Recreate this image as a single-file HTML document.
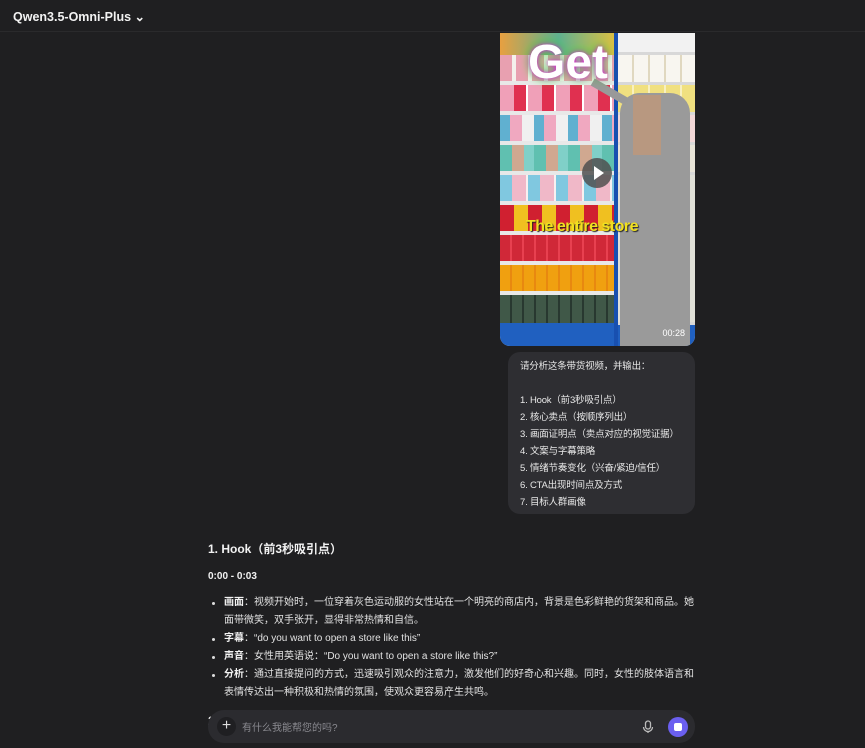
<!DOCTYPE html>
<html><head><meta charset="utf-8"><style>
*{margin:0;padding:0;box-sizing:border-box}
body{width:865px;height:748px;background:#1f1f21;font-family:"Liberation Sans","Noto Sans CJK SC",sans-serif;color:#e6e6e6;position:relative;overflow:hidden}
.hdr{position:absolute;left:0;top:0;width:865px;height:32px;border-bottom:1px solid #2a2a2c}
.hdr span{position:absolute;left:13px;top:9px;font-size:12.5px;font-weight:bold;color:#f2f2f2}
.vid{position:absolute;left:500px;top:33px;width:195px;height:313px;border-radius:0 0 10px 10px;overflow:hidden;background:#ddd}
.row{position:absolute;left:0;width:117px;height:30px;border-bottom:4px solid #e8e8e8}
.r{position:absolute;left:118px;width:77px;height:30px;border-bottom:3px solid #d8d8d8;background:#f0eee8}
.bub{position:absolute;left:508px;top:352px;width:187px;height:162px;background:#2e2e32;border-radius:12px;font-size:9.5px;line-height:17px;padding:6px 8px 6px 12px;color:#e8e8e8;white-space:nowrap;letter-spacing:-.2px}
.main{position:absolute;left:208px;top:540px;width:490px;font-size:10px;color:#e2e2e2}
h3{font-size:12px;font-weight:bold;color:#f2f2f2;margin-bottom:10px}
ul{list-style:none;margin-top:12px}
li{position:relative;padding-left:16px;line-height:18px}
li:before{content:"";position:absolute;left:4px;top:8px;width:3px;height:3px;background:#ddd;border-radius:50%}
b{color:#f2f2f2}
.inp{position:absolute;left:208px;top:710px;width:487px;height:33px;background:#2b2b2f;border-radius:16px}
</style></head><body>
<div class="hdr"><span>Qwen3.5-Omni-Plus ⌄</span></div>
<div class="vid">
<div style="position:absolute;left:0;top:0;width:117px;height:22px;background:linear-gradient(90deg,#e8a040,#60b090,#e0c040)"></div>
<div class="row" style="top:22px;background:repeating-linear-gradient(90deg,#e8a0b0 0 12px,#f4f0ec 12px 16px)"></div>
<div class="row" style="top:52px;background:repeating-linear-gradient(90deg,#f0a0b8 0 14px,#e03050 14px 26px,#fff 26px 28px)"></div>
<div class="row" style="top:82px;background:repeating-linear-gradient(90deg,#60b0d0 0 10px,#f0a8c0 10px 22px,#f0f0f0 22px 34px)"></div>
<div class="row" style="top:112px;background:repeating-linear-gradient(90deg,#60c0b0 0 12px,#d0a890 12px 24px,#80d0c8 24px 34px)"></div>
<div class="row" style="top:142px;background:repeating-linear-gradient(90deg,#80c8e0 0 12px,#f0b8c8 12px 26px,#f8f0f0 26px 28px)"></div>
<div class="row" style="top:172px;background:repeating-linear-gradient(90deg,#d02030 0 14px,#f0c020 14px 28px)"></div>
<div class="row" style="top:202px;background:repeating-linear-gradient(90deg,#d02838 0 10px,#e84050 10px 12px)"></div>
<div class="row" style="top:232px;background:repeating-linear-gradient(90deg,#f0a010 0 10px,#e88810 10px 12px)"></div>
<div class="row" style="top:262px;height:34px;border:none;background:repeating-linear-gradient(90deg,#405848 0 10px,#283830 10px 12px)"></div>
<div style="position:absolute;left:0;top:290px;width:195px;height:23px;background:#2060c0"></div>
<div style="position:absolute;left:114px;top:0;width:4px;height:313px;background:#1850b0"></div>
<div class="r" style="top:0;height:22px;background:#f2f2f2"></div>
<div class="r" style="top:22px;background:repeating-linear-gradient(90deg,#f8f6f0 0 14px,#e0d8c0 14px 16px)"></div>
<div class="r" style="top:52px;background:repeating-linear-gradient(90deg,#f0e080 0 14px,#f8f0c0 14px 16px)"></div>
<div class="r" style="top:82px;background:#f2d8d8"></div>
<div class="r" style="top:112px;background:#e8e4d8"></div>
<div class="r" style="top:142px;height:150px;background:#e0e0d8"></div>
<div style="position:absolute;left:120px;top:60px;width:70px;height:253px;background:#9a9a9a;border-radius:20px 20px 0 0"></div>
<div style="position:absolute;left:90px;top:55px;width:40px;height:8px;background:#999;transform:rotate(30deg)"></div>
<div style="position:absolute;left:133px;top:62px;width:28px;height:60px;background:#b89880"></div>
<div style="position:absolute;left:28px;top:2px;font-size:48px;font-weight:bold;color:#fff;text-shadow:0 0 6px #f0f,0 0 10px #0f0">Get</div>
<div style="position:absolute;left:26px;top:185px;font-size:16px;font-weight:bold;color:#f0e020;text-shadow:1px 1px 1px #222;letter-spacing:-.5px">The entire store</div>
<div style="position:absolute;left:82px;top:125px;width:30px;height:30px;border-radius:50%;background:rgba(80,80,80,.85)"><div style="position:absolute;left:12px;top:8px;border-left:10px solid #fff;border-top:7px solid transparent;border-bottom:7px solid transparent"></div></div>
<div style="position:absolute;right:10px;bottom:8px;font-size:9px;color:#fff">00:28</div>
</div>
<div class="bub">请分析这条带货视频，并输出：<br><br>1. Hook（前3秒吸引点）<br>2. 核心卖点（按顺序列出）<br>3. 画面证明点（卖点对应的视觉证据）<br>4. 文案与字幕策略<br>5. 情绪节奏变化（兴奋/紧迫/信任）<br>6. CTA出现时间点及方式<br>7. 目标人群画像</div>
<div class="main">
<h3>1. Hook（前3秒吸引点）</h3>
<div style="font-weight:bold;color:#f2f2f2;margin-top:14px">0:00 - 0:03</div>
<ul>
<li><b>画面</b>：视频开始时，一位穿着灰色运动服的女性站在一个明亮的商店内，背景是色彩鲜艳的货架和商品。她面带微笑，双手张开，显得非常热情和自信。</li>
<li><b>字幕</b>：“do you want to open a store like this”</li>
<li><b>声音</b>：女性用英语说：“Do you want to open a store like this?”</li>
<li><b>分析</b>：通过直接提问的方式，迅速吸引观众的注意力，激发他们的好奇心和兴趣。同时，女性的肢体语言和表情传达出一种积极和热情的氛围，使观众更容易产生共鸣。</li>
</ul>
<h3 style="margin-top:10px">2. 核心卖点（按顺序列出）</h3>
</div>
<div style="position:absolute;left:447px;top:688px;font-size:11px;color:#ccc">↓</div>
<div class="inp">
<div style="position:absolute;left:9px;top:7px;width:19px;height:19px;border-radius:50%;background:#1f1f22;color:#ddd;font-size:16px;line-height:18px;text-align:center">+</div>
<div style="position:absolute;left:34px;top:9px;font-size:10px;color:#8a8a90">有什么我能帮您的吗?</div>
<svg style="position:absolute;left:434px;top:10px" width="12" height="14" viewBox="0 0 12 14" fill="none" stroke="#bbb" stroke-width="1.3"><rect x="3.5" y="1" width="5" height="8" rx="2.5"/><path d="M1.5 7a4.5 4.5 0 0 0 9 0M6 11.5V13"/></svg>
<div style="position:absolute;left:460px;top:7px;width:20px;height:20px;border-radius:50%;background:#6b5ff0"><div style="position:absolute;left:6px;top:6px;width:8px;height:8px;background:#fff;border-radius:2px"></div></div>
</div>
</body></html>
